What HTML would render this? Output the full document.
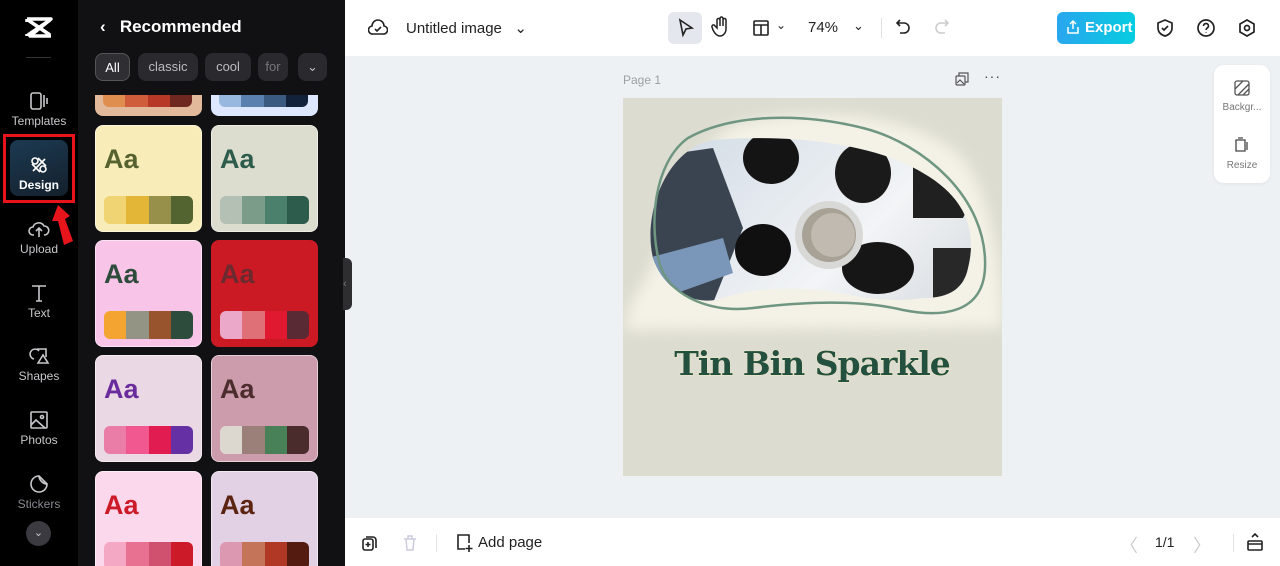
<!DOCTYPE html>
<html><head><meta charset="utf-8"><style>
*{box-sizing:border-box;margin:0;padding:0}
body{width:1280px;height:566px;overflow:hidden;font-family:"Liberation Sans",sans-serif;background:#eef1f4;position:relative}
.abs{position:absolute}
#nav{left:0;top:0;width:78px;height:566px;background:#000}
.ni{position:absolute;left:0;width:78px;text-align:center;color:#c8c8cc;font-size:12px}
.ni svg{display:block;margin:0 auto 3px}
#panel{left:78px;top:0;width:267px;height:566px;background:#111113;overflow:hidden}
#cards{position:absolute;left:0;top:95px;width:267px;height:471px;overflow:hidden}
.chip{position:absolute;top:53px;height:28px;border-radius:8px;background:#2a2a2e;color:#bcbcc0;font-size:13px;line-height:28px;text-align:center}
.card{position:absolute;width:107px;height:107px;border-radius:8px;overflow:hidden;border:1px solid rgba(255,255,255,.5)}
.card .aa{position:absolute;left:8px;top:18px;font-size:27px;font-weight:bold}
.pal{position:absolute;left:8px;top:70px;width:89px;height:28px;border-radius:6px;overflow:hidden;display:flex}
.pal i{flex:1}
#top{left:345px;top:0;width:935px;height:56px;background:#fff}
#bot{left:345px;top:518px;width:935px;height:48px;background:#fff}
.t{color:#222;font-size:15px}
</style></head><body>
<div id="nav" class="abs">
 <svg class="abs" style="left:24px;top:15px" width="30" height="26" viewBox="0 0 30 26"><path d="M3 4h24L6 21h21M27 4L6 21M3 4v3M3 21v-2" stroke="#fff" stroke-width="3.5" fill="none" stroke-linejoin="round"/><path d="M4 5 L26 20 M4 20 L26 5" stroke="#fff" stroke-width="3.5"/></svg>
 <div class="abs" style="left:26px;top:57px;width:25px;height:1px;background:#333"></div>
 <div class="ni" style="top:91px"><svg width="20" height="20" viewBox="0 0 20 20" fill="none" stroke="#c8c8cc" stroke-width="1.6"><rect x="2" y="2" width="10" height="16" rx="2"/><path d="M15 4v12M18 7v6"/></svg>Templates</div>
 <div class="abs" style="left:3px;top:134px;width:72px;height:69px;border:3px solid #e8141c"></div>
 <div class="abs" style="left:10px;top:140px;width:58px;height:56px;border-radius:8px;background:linear-gradient(160deg,#1c3a52,#14202c)"></div>
 <div class="ni" style="top:155px;color:#fff;font-weight:bold;font-size:12px"><svg width="20" height="20" viewBox="0 0 20 20" fill="none" stroke="#fff" stroke-width="1.6"><circle cx="6" cy="6" r="3"/><circle cx="14" cy="14" r="3"/><path d="M4 16L16 4M9 3l8 8M3 9l8 8"/></svg>Design</div>
 <div class="ni" style="top:219px"><svg width="22" height="20" viewBox="0 0 22 20" fill="none" stroke="#c8c8cc" stroke-width="1.6"><path d="M6 16H5a4 4 0 010-8 6 6 0 0111-1 4 4 0 01.5 9H16M11 18v-8M8 12l3-3 3 3"/></svg>Upload</div>
 <svg class="abs" style="left:50px;top:205px" width="28" height="42" viewBox="0 0 28 42"><path d="M8 0L2 16h6l6 24 9-4-8-22 5-3z" fill="#e8141c"/></svg>
 <div class="ni" style="top:283px"><svg width="20" height="20" viewBox="0 0 20 20" fill="none" stroke="#c8c8cc" stroke-width="1.6"><path d="M3 3h14M10 3v15M7 18h6"/></svg>Text</div>
 <div class="ni" style="top:346px"><svg width="22" height="20" viewBox="0 0 22 20" fill="none" stroke="#c8c8cc" stroke-width="1.6"><path d="M6 13a5 5 0 115-8M9 3h9v8M10 17l5-8 5 8z"/></svg>Shapes</div>
 <div class="ni" style="top:410px"><svg width="20" height="20" viewBox="0 0 20 20" fill="none" stroke="#c8c8cc" stroke-width="1.6"><rect x="2" y="2" width="16" height="16" rx="1"/><circle cx="13" cy="7" r="1.5"/><path d="M2 15l5-5 9 8"/></svg>Photos</div>
 <div class="ni" style="top:474px;color:#8a8a90"><svg width="20" height="20" viewBox="0 0 20 20" fill="none" stroke="#c8c8cc" stroke-width="1.6"><path d="M18 10A8 8 0 1110 2c0 4 4 8 8 8zM10 2l8 8"/></svg>Stickers</div>
 <div class="abs" style="left:26px;top:521px;width:25px;height:25px;border-radius:50%;background:#3a3a40;color:#ccc;text-align:center;font-size:11px;line-height:25px">&#8964;</div>
</div>
<div id="panel" class="abs">
 <div class="abs" style="left:22px;top:17px;color:#fff;font-size:17px;font-weight:bold">&#8249;&nbsp;&nbsp;&nbsp;Recommended</div>
 <div class="chip" style="left:17px;width:35px;background:#2e2e33;color:#fff;border:1px solid #555">All</div>
 <div class="chip" style="left:60px;width:60px">classic</div>
 <div class="chip" style="left:127px;width:46px">cool</div>
 <div class="chip" style="left:180px;width:30px;overflow:hidden;color:#777">for</div>
 <div class="chip" style="left:220px;width:29px">&#8964;</div>
 <div id="cards">
 <div class="card" style="left:17px;top:-86px;background:#e2b99a;border:0"><div class="pal"><i style="background:#e08e50"></i><i style="background:#cf5c3a"></i><i style="background:#b83828"></i><i style="background:#6e2820"></i></div></div>
 <div class="card" style="left:133px;top:-86px;background:#dde7ff;border:0"><div class="pal"><i style="background:#98b8e0"></i><i style="background:#5a80b0"></i><i style="background:#3a5a80"></i><i style="background:#12223a"></i></div></div>
 <div class="card" style="left:17px;top:30px;background:#f8ecb8"><div class="aa" style="color:#566230">Aa</div><div class="pal"><i style="background:#f0d474"></i><i style="background:#e4b638"></i><i style="background:#96904a"></i><i style="background:#546430"></i></div></div>
 <div class="card" style="left:133px;top:30px;background:#dcdccf"><div class="aa" style="color:#2e5c4c">Aa</div><div class="pal"><i style="background:#b4c0b4"></i><i style="background:#7c9c8a"></i><i style="background:#4a806c"></i><i style="background:#2e5c4c"></i></div></div>
 <div class="card" style="left:17px;top:145px;background:#f8c4e8"><div class="aa" style="color:#2e4c3c">Aa</div><div class="pal"><i style="background:#f4a430"></i><i style="background:#949484"></i><i style="background:#98542c"></i><i style="background:#2e4c3c"></i></div></div>
 <div class="card" style="left:133px;top:145px;background:#cc1a24;border-color:#cc1a24"><div class="aa" style="color:#6a2a30">Aa</div><div class="pal"><i style="background:#eca8c8"></i><i style="background:#e07078"></i><i style="background:#e01830"></i><i style="background:#5a2a34"></i></div></div>
 <div class="card" style="left:17px;top:260px;background:#ead8e4"><div class="aa" style="color:#6a2c9c">Aa</div><div class="pal"><i style="background:#ea7ca8"></i><i style="background:#f25890"></i><i style="background:#e01c50"></i><i style="background:#6430a4"></i></div></div>
 <div class="card" style="left:133px;top:260px;background:#cc9cac"><div class="aa" style="color:#4c2c2c">Aa</div><div class="pal"><i style="background:#dcd8d0"></i><i style="background:#9a8078"></i><i style="background:#488058"></i><i style="background:#4a2c2c"></i></div></div>
 <div class="card" style="left:17px;top:376px;background:#fcd8ec"><div class="aa" style="color:#cc1a28">Aa</div><div class="pal"><i style="background:#f4a8c4"></i><i style="background:#e87090"></i><i style="background:#d05070"></i><i style="background:#cc1a28"></i></div></div>
 <div class="card" style="left:133px;top:376px;background:#e2d0e4"><div class="aa" style="color:#5a2410">Aa</div><div class="pal"><i style="background:#dc98b0"></i><i style="background:#c47458"></i><i style="background:#b03824"></i><i style="background:#541c10"></i></div></div>
 </div>
</div>
<div class="abs" style="left:343px;top:258px;width:9px;height:52px;background:#2e2e30;border-radius:0 6px 6px 0;color:#777;font-size:11px;line-height:52px">&#8249;</div>
<div id="top" class="abs">
 <svg class="abs" style="left:23px;top:18px" width="20" height="20" viewBox="0 0 20 20" fill="none" stroke="#222" stroke-width="1.6"><path d="M5 16a4 4 0 01-1-8 6 6 0 0112 0 4 4 0 01-1 8z"/><path d="M7 11l2 2 4-4"/></svg>
 <div class="abs t" style="left:61px;top:19px">Untitled image &nbsp;&nbsp;&#8964;</div>
 <div class="abs" style="left:323px;top:12px;width:34px;height:32px;border-radius:6px;background:#e4e8ee"></div>
 <svg class="abs" style="left:331px;top:18px" width="20" height="20" viewBox="0 0 20 20" fill="none" stroke="#222" stroke-width="1.6"><path d="M4 2l12 8-6 1-3 6z"/></svg>
 <svg class="abs" style="left:366px;top:16px" width="20" height="22" viewBox="0 0 20 22" fill="none" stroke="#222" stroke-width="1.5"><path d="M6 12V4a1.5 1.5 0 013 0v6V2.5a1.5 1.5 0 013 0V10V4a1.5 1.5 0 013 0v9c0 4-3 7-6 7s-5-2-7-6l-1-3a1.5 1.5 0 013-1z"/></svg>
 <svg class="abs" style="left:407px;top:19px" width="18" height="18" viewBox="0 0 18 18" fill="none" stroke="#222" stroke-width="1.6"><rect x="2" y="2" width="14" height="14" rx="1"/><path d="M2 6h14M9 6v10"/></svg>
 <div class="abs t" style="left:431px;top:18px;font-size:12px">&#8964;</div>
 <div class="abs t" style="left:463px;top:19px">74%</div>
 <div class="abs t" style="left:508px;top:18px;font-size:13px">&#8964;</div>
 <div class="abs" style="left:536px;top:18px;width:1px;height:20px;background:#e0e0e0"></div>
 <svg class="abs" style="left:550px;top:18px" width="18" height="20" viewBox="0 0 18 20" fill="none" stroke="#222" stroke-width="1.6"><path d="M5 2L2 5l3 3M2 5h7a5 5 0 010 10H5"/></svg>
 <svg class="abs" style="left:587px;top:18px" width="18" height="20" viewBox="0 0 18 20" fill="none" stroke="#ccc" stroke-width="1.6"><path d="M13 2l3 3-3 3M16 5H9a5 5 0 000 10h4"/></svg>
 <div class="abs" style="left:712px;top:12px;width:78px;height:32px;border-radius:6px;background:linear-gradient(90deg,#2aa6ee,#06cce0);color:#fff;font-weight:bold;font-size:15px;line-height:32px;padding-left:28px">Export</div>
 <svg class="abs" style="left:720px;top:19px" width="16" height="16" viewBox="0 0 16 16" fill="none" stroke="#fff" stroke-width="1.5"><path d="M3 8v6h10V8M8 10V2M5 5l3-3 3 3"/></svg>
 <svg class="abs" style="left:810px;top:18px" width="20" height="20" viewBox="0 0 20 20" fill="none" stroke="#222" stroke-width="1.7"><path d="M10 2l7 3v5c0 4-3 7-7 8-4-1-7-4-7-8V5z"/><path d="M7 10l2 2 4-4"/></svg>
 <svg class="abs" style="left:851px;top:18px" width="20" height="20" viewBox="0 0 20 20" fill="none" stroke="#222" stroke-width="1.7"><circle cx="10" cy="10" r="8"/><path d="M7.5 8a2.5 2.5 0 115 0c0 2-2.5 2-2.5 4M10 14.5v.5"/></svg>
 <svg class="abs" style="left:892px;top:18px" width="20" height="20" viewBox="0 0 20 20" fill="none" stroke="#222" stroke-width="1.7"><path d="M10 2l7 4v8l-7 4-7-4V6z"/><circle cx="10" cy="10" r="2.5"/></svg>
</div>
<div class="abs" style="left:623px;top:73px;color:#9aa0a6;font-size:12px">Page 1</div>
<svg class="abs" style="left:955px;top:72px" width="14" height="14" viewBox="0 0 14 14" fill="none" stroke="#555" stroke-width="1.2"><rect x="1" y="4" width="9" height="9" rx="1"/><path d="M4 4V1h9v9h-3M2 11l3-3 4 4"/></svg>
<div class="abs" style="left:984px;top:68px;color:#444;font-size:14px;letter-spacing:1px">&middot;&middot;&middot;</div>
<div class="abs" style="left:623px;top:98px;width:379px;height:378px;background:#dcdcd1;overflow:hidden">
<svg width="379" height="378" viewBox="0 0 379 378">
<defs>
<filter id="bl"><feGaussianBlur stdDeviation="7"/></filter>
<clipPath id="cp"><path d="M90 42 C160 36 250 44 300 75 C340 98 355 130 345 170 C340 195 320 200 300 200 C270 205 240 200 210 194 C170 188 130 190 100 200 C70 210 40 190 30 160 C20 120 40 52 90 42z"/></clipPath>
<linearGradient id="mg" x1="0" y1="0" x2="1" y2="1"><stop offset="0" stop-color="#c8d4e0"/><stop offset=".5" stop-color="#f2f4f6"/><stop offset="1" stop-color="#b8c0c8"/></linearGradient>
</defs>
<path d="M10 200 C40 170 60 40 120 25 C200 5 300 20 340 60 C370 100 379 180 379 215 L379 230 L0 232z" fill="#f4f2e6" filter="url(#bl)"/>
<g clip-path="url(#cp)">
<rect width="379" height="378" fill="url(#mg)"/>
<path d="M20 60 L90 50 L120 130 L80 230 L20 230z" fill="#3a4450"/>
<path d="M25 160 L100 140 L110 175 L40 200z" fill="#7a96b8"/>
<ellipse cx="148" cy="60" rx="28" ry="26" fill="#141414"/>
<ellipse cx="240" cy="75" rx="28" ry="30" fill="#1a1a1a"/>
<ellipse cx="140" cy="152" rx="28" ry="26" fill="#101010"/>
<ellipse cx="255" cy="170" rx="36" ry="26" fill="#161616"/>
<path d="M290 60 L350 100 L340 120 L290 120z" fill="#202020"/>
<path d="M310 150 L350 150 L345 200 L310 200z" fill="#282828"/>
<circle cx="206" cy="137" r="34" fill="#d8d8d6"/>
<circle cx="206" cy="137" r="27" fill="#a8a296"/>
<circle cx="210" cy="137" r="22" fill="#c0bab0"/>
</g>
<path d="M65 40 C110 15 180 15 240 30 C300 45 365 100 362 170 C360 215 320 220 280 212 C230 200 170 205 130 210 C90 215 50 200 38 170 C25 130 30 65 65 40z" fill="none" stroke="#6e9680" stroke-width="2.5"/>
<text x="189" y="277" text-anchor="middle" font-family="'DejaVu Serif','Liberation Serif',serif" font-weight="bold" font-size="33" fill="#245040" stroke="#f2ebc8" stroke-width="1" paint-order="stroke" letter-spacing="-1">Tin Bin Sparkle</text>
</svg>
</div>
<div class="abs" style="left:1214px;top:65px;width:56px;height:118px;background:#fff;border-radius:10px;box-shadow:0 1px 4px rgba(0,0,0,.06)"></div>
<svg class="abs" style="left:1234px;top:80px" width="16" height="16" viewBox="0 0 16 16" fill="none" stroke="#555" stroke-width="1.3"><rect x="1" y="1" width="14" height="14" rx="2"/><path d="M1 9l8-8M4 15L15 4M9 15l6-6"/></svg>
<div class="abs" style="left:1214px;top:102px;width:56px;text-align:center;font-size:10px;color:#777">Backgr...</div>
<svg class="abs" style="left:1233px;top:137px" width="17" height="17" viewBox="0 0 17 17" fill="none" stroke="#444" stroke-width="1.3"><path d="M3 3h9v11H3zM5 1h5M14 5v8"/></svg>
<div class="abs" style="left:1214px;top:160px;width:56px;text-align:center;font-size:10px;color:#777">Resize</div>
<div id="bot" class="abs">
 <svg class="abs" style="left:16px;top:16px" width="18" height="18" viewBox="0 0 18 18" fill="none" stroke="#222" stroke-width="1.6"><rect x="2" y="5" width="10" height="11" rx="2"/><path d="M5 3h7a3 3 0 013 3v8M7 8v5M4.5 10.5h5"/></svg>
 <svg class="abs" style="left:57px;top:16px" width="16" height="18" viewBox="0 0 16 18" fill="none" stroke="#ccd" stroke-width="1.5"><path d="M2 5h12M4 5l1 11h6l1-11M6 5V2h4v3"/></svg>
 <div class="abs" style="left:91px;top:16px;width:1px;height:18px;background:#e4e4e4"></div>
 <svg class="abs" style="left:110px;top:15px" width="18" height="20" viewBox="0 0 18 20" fill="none" stroke="#222" stroke-width="1.6"><path d="M10 16H3V2h11v8M14 12v7M10.5 15.5h7"/></svg>
 <div class="abs t" style="left:133px;top:16px">Add page</div>
 <div class="abs" style="left:775px;top:14px;color:#ccc;font-size:18px">&#12296;</div>
 <div class="abs t" style="left:810px;top:16px;font-size:14px">1/1</div>
 <div class="abs" style="left:848px;top:14px;color:#ccc;font-size:18px">&#12297;</div>
 <div class="abs" style="left:888px;top:16px;width:1px;height:18px;background:#e4e4e4"></div>
 <svg class="abs" style="left:901px;top:14px" width="18" height="20" viewBox="0 0 18 20" fill="none" stroke="#222" stroke-width="1.6"><rect x="2" y="9" width="14" height="9" rx="1"/><path d="M2 12h14M6 5l3-3 3 3"/></svg>
</div>
</body></html>
